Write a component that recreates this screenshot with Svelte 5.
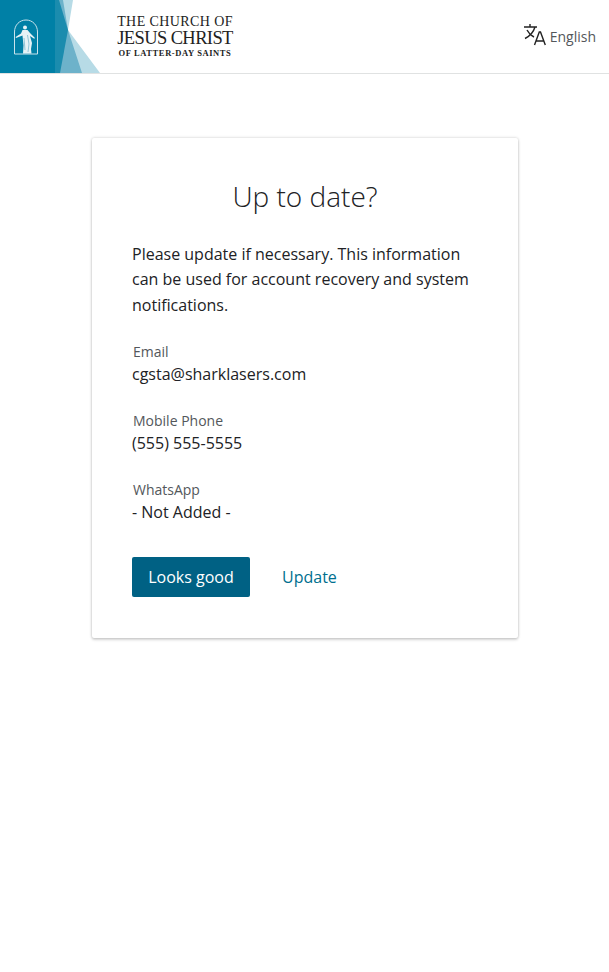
<script>
  let fields = [
    { label: 'Email', value: 'cgsta@sharklasers.com' },
    { label: 'Mobile Phone', value: '(555) 555-5555' },
    { label: 'WhatsApp', value: '- Not Added -' }
  ];
</script>

<header class="top">
  <div class="brand">
    <svg class="mark" width="100" height="73" viewBox="0 0 100 73" aria-hidden="true">
      <rect width="60" height="73" fill="#0080a6" />
      <polygon points="55,0 73,0 68,30 100,73 55,73" fill="#b7dbe6" />
      <polygon points="55,0 63,0 68,30 82,73 55,73" fill="#6db2ca" />
      <polygon points="55,0 59,0 68,30 60,73 55,73" fill="#1b8cae" />
      <path d="M14.500 54V32c0-7 5-12 11.500-12s11.500 5 11.500 12v22z" fill="none" stroke="#c9e3ec" stroke-width="1" />
      <circle cx="25" cy="27.500" r="2" fill="#e6f2f6" />
      <path d="M22.500 30h5l2.500 3 5 5-.8.8-4.200-2.800 2 7-1 6 .5 4.500h-8.500l.5-8-1-10-6.500 2.500-.4-1 5.400-3.500z" fill="#e6f2f6" />
      <path d="M27.500 35l1.500 9-1 8M24 38l1 12" fill="none" stroke="#6db2ca" stroke-width="0.7" />
    </svg>
    <div class="wordmark">
      <span class="l1">The Church of</span>
      <span class="l2">Jesus Christ</span>
      <span class="l3">of Latter-day Saints</span>
    </div>
  </div>
  <div class="lang">
    <svg width="23" height="23" viewBox="0 0 23 23" fill="none" stroke="#222" stroke-width="1.4" aria-hidden="true">
      <path d="M1 4h13M7 1v3M12 4c-1.500 5-5 9-10 11.500M4 7c1.500 3 4 5.500 7 7" />
      <path d="M11.500 22l4.800-13h1.200l4.800 13M13.300 18h7.400" />
    </svg>
    <span>English</span>
  </div>
</header>

<main class="page">
  <section class="card">
    <h1>Up to date?</h1>
    <p class="intro">Please update if necessary. This information can be used for account recovery and system notifications.</p>

    {#each fields as field}
      <div class="field">
        <div class="label">{field.label}</div>
        <div class="value">{field.value}</div>
      </div>
    {/each}

    <div class="actions">
      <button class="primary">Looks good</button>
      <a class="link" href="#update">Update</a>
    </div>
  </section>
</main>

<style>
  :global(body) {
    margin: 0;
    background: #fff;
    font-family: "Open Sans", "Noto Sans", sans-serif;
    color: #212225;
  }

  .top {
    height: 73px;
    border-bottom: 1px solid #e0e2e2;
    display: flex;
    justify-content: space-between;
    align-items: center;
  }

  .brand {
    display: flex;
    align-items: center;
    height: 73px;
  }

  .mark {
    display: block;
  }

  .wordmark {
    margin-left: 17px;
    width: 116px;
    display: flex;
    flex-direction: column;
    align-items: center;
    font-family: "Liberation Serif", serif;
    color: #222;
    text-transform: uppercase;
    white-space: nowrap;
  }

  .l1 {
    font-size: 14px;
    line-height: 14px;
    letter-spacing: 0.4px;
  }

  .l2 {
    font-size: 18.500px;
    line-height: 19px;
    letter-spacing: -0.6px;
  }

  .l3 {
    font-size: 8.500px;
    line-height: 11px;
    font-weight: 700;
    letter-spacing: 0.6px;
  }

  .lang {
    display: flex;
    align-items: center;
    gap: 4px;
    margin-right: 13px;
    font-size: 14px;
    color: #53575b;
  }

  .lang svg {
    margin-bottom: 5px;
  }

  .page {
    display: flex;
    justify-content: center;
    padding: 64px 0 64px 1px;
  }

  .card {
    box-sizing: border-box;
    width: 426px;
    height: 500px;
    padding: 40px;
    background: #fff;
    box-shadow: 0 0 3px rgba(0, 0, 0, 0.22), 0 2px 3px rgba(0, 0, 0, 0.14);
    border-radius: 2px;
  }

  h1 {
    margin: 0 0 27.500px;
    font-size: 28px;
    font-weight: 300;
    line-height: 36px;
    text-align: center;
    color: #212225;
  }

  .intro {
    margin: 0 0 23.500px;
    font-size: 16px;
    line-height: 25.500px;
  }

  .field {
    margin-bottom: 25.300px;
  }

  .label {
    margin-left: 1px;
    font-size: 14px;
    line-height: 20px;
    color: #53575b;
  }

  .value {
    font-size: 16px;
    line-height: 24px;
  }

  .actions {
    display: flex;
    align-items: center;
    gap: 32px;
    margin-top: 33px;
  }

  .primary {
    width: 118px;
    height: 40px;
    border: none;
    border-radius: 2px;
    background: #006184;
    color: #fff;
    font-family: inherit;
    font-size: 16px;
    cursor: pointer;
  }

  .link {
    color: #006f8f;
    font-size: 16px;
    text-decoration: none;
  }
</style>
